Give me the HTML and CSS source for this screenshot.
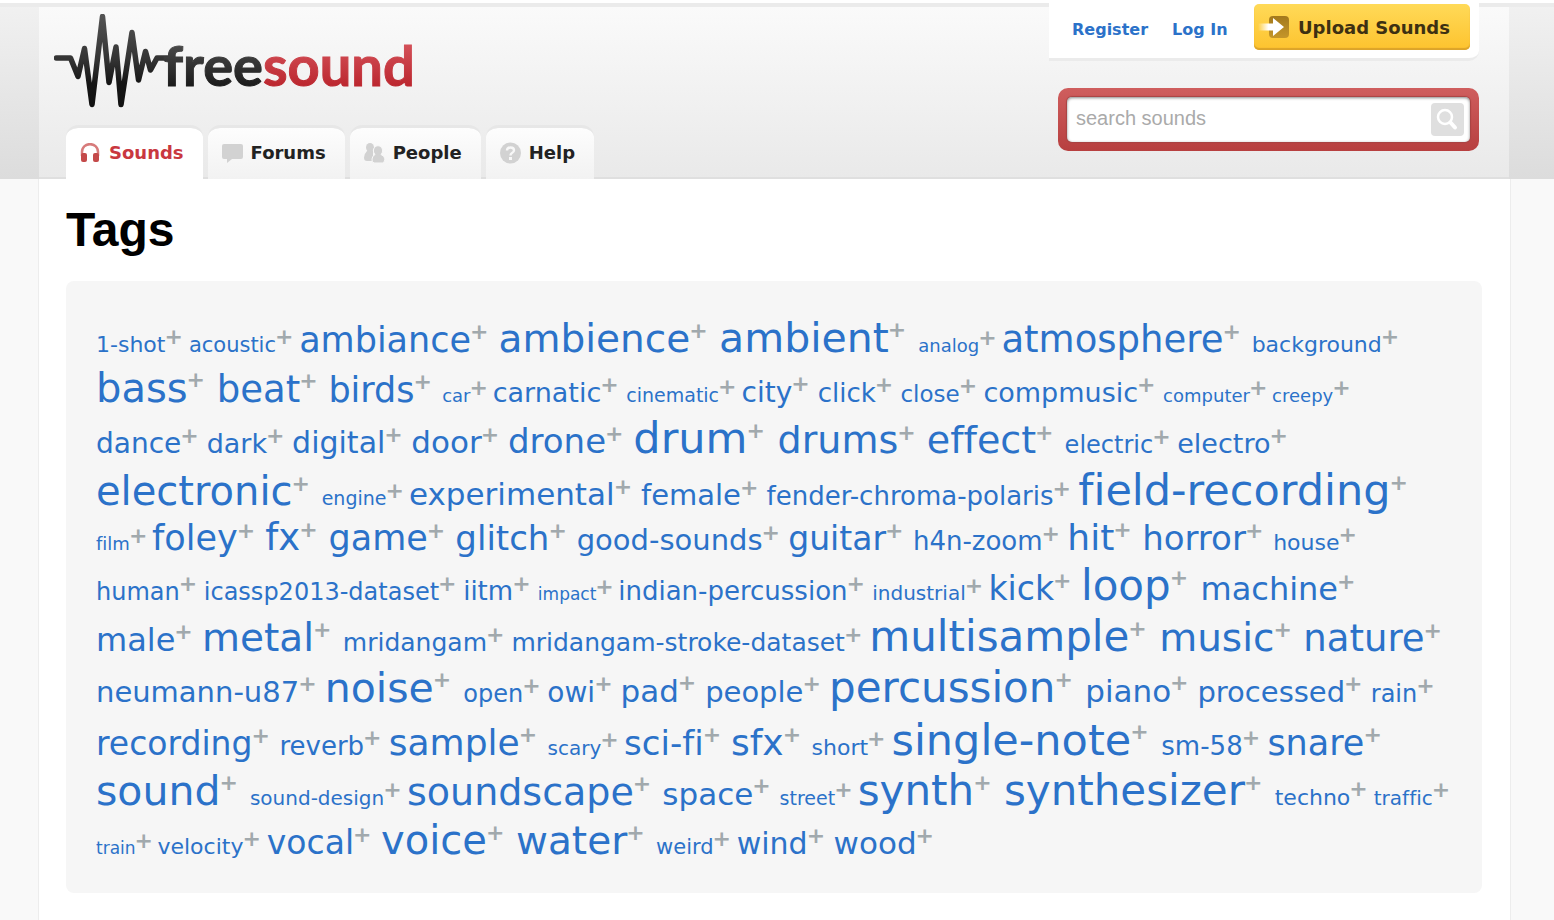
FILE: index.html
```html
<!DOCTYPE html>
<html lang="en">
<head>
    <meta charset="UTF-8">
    <meta name="viewport" content="width=device-width, initial-scale=1.0">
    <title>Freesound - Tags</title>
    <link rel="stylesheet" href="styles.css">
</head>
<body>

    <header id="header">
        <div class="header-inner">
            <div class="header-left">
                <a class="logo" href="#" aria-label="freesound">
                    <svg width="360" height="94" viewBox="54 14 360 94">
                        <defs>
                            <linearGradient id="wave" gradientUnits="userSpaceOnUse" x1="0" y1="14" x2="0" y2="106">
                                <stop offset="0" stop-color="#555"/>
                                <stop offset="0.5" stop-color="#333"/>
                                <stop offset="0.75" stop-color="#161616"/>
                                <stop offset="1" stop-color="#111"/>
                            </linearGradient>
                            <linearGradient id="black" gradientUnits="userSpaceOnUse" x1="0" y1="43" x2="0" y2="87">
                                <stop offset="0" stop-color="#4c4c4c"/>
                                <stop offset="1" stop-color="#1a1a1a"/>
                            </linearGradient>
                            <linearGradient id="red" gradientUnits="userSpaceOnUse" x1="0" y1="43" x2="0" y2="87">
                                <stop offset="0" stop-color="#d4525a"/>
                                <stop offset="1" stop-color="#bb262e"/>
                            </linearGradient>
                        </defs>
                        <path d="M56.500 58H70.500L78 76.500L84.500 48.500L92 104.500L102.500 16.500L109 82.500L116 47L121 104.500L132 32.500L138.500 80L145.500 51.500L150.500 70L157 58H168" fill="none" stroke="url(#wave)" stroke-width="5.500" stroke-linejoin="round" stroke-linecap="round"/>
                        <text x="163" y="86" class="logo-text"><tspan fill="url(#black)" stroke="url(#black)">free</tspan><tspan fill="url(#red)" stroke="url(#red)">sound</tspan></text>
                    </svg>
                </a>
                <nav class="tabs">
                    <a class="tab active" href="#">
                        <svg width="21" height="20" viewBox="0 0 21 20">
                            <path d="M2 13V9C2 -1.500 18 -1.500 18 9V13" fill="none" stroke="#d77b7b" stroke-width="2.500"/>
                            <rect x="1" y="10" width="6" height="9" rx="2" fill="#c44a4a"/>
                            <rect x="13" y="10" width="6" height="9" rx="2" fill="#c44a4a"/>
                        </svg>
                        Sounds
                    </a>
                    <a class="tab" href="#">
                        <svg width="21" height="20" viewBox="0 0 21 20">
                            <path d="M2 1H19Q21 1 21 3V14Q21 16 19 16H10L5 20V16H2Q0 16 0 14V3Q0 1 2 1Z" fill="#d2d2d2"/>
                        </svg>
                        Forums
                    </a>
                    <a class="tab" href="#">
                        <svg width="21" height="20" viewBox="0 0 21 20">
                            <g fill="#d2d2d2">
                                <ellipse cx="6" cy="4.500" rx="4" ry="4.500"/>
                                <path d="M3 8H9V18H3Q0 18 0 14.500Q0 11 3 8Z"/>
                            </g>
                            <g fill="#d2d2d2" stroke="#f8f8f8">
                                <path d="M10 20Q7.500 19 8 16Q8.500 12.500 11 11.500A4.600 5 0 1 1 17 11.500Q20.500 13 21 16Q21 19 18.500 20Z"/>
                            </g>
                        </svg>
                        People
                    </a>
                    <a class="tab" href="#">
                        <svg width="21" height="22" viewBox="0 0 21 22">
                            <circle cx="10.500" cy="11" r="10.500" fill="#d2d2d2"/>
                            <path d="M7 8.500Q7 5.500 10.500 5.500Q14 5.500 14 8.300Q14 10 12 11Q10.500 11.800 10.500 13.500" fill="none" stroke="#f8f8f8" stroke-width="2.400"/>
                            <rect x="9" y="15" width="3" height="3" fill="#f8f8f8"/>
                        </svg>
                        Help
                    </a>
                </nav>
            </div>

            <div class="header-right">
                <div class="user-box">
                    <a href="#">Register</a>
                    <a href="#">Log In</a>
                    <button class="upload" type="button">
                        <svg width="32" height="24" viewBox="0 0 32 24">
                            <defs>
                                <linearGradient id="fade" x1="0" x2="1" y1="0" y2="0">
                                    <stop offset="0" stop-color="#fff" stop-opacity="0"/>
                                    <stop offset="0.4" stop-color="#fff"/>
                                </linearGradient>
                                <linearGradient id="gold" x1="0" x2="0" y1="0" y2="1">
                                    <stop offset="0" stop-color="#a3791c"/>
                                    <stop offset="1" stop-color="#c5962a"/>
                                </linearGradient>
                            </defs>
                            <rect x="11" y="1" width="20" height="22" rx="4" fill="url(#gold)"/>
                            <path d="M0 8.500H15V3L26 12L15 21V15.500H0Z" fill="url(#fade)"/>
                        </svg>
                        Upload Sounds
                    </button>
                </div>
                <form class="search">
                    <div class="search-field">
                        <input type="text" placeholder="search sounds" aria-label="search sounds">
                        <button type="button" aria-label="Search">
                            <svg width="33" height="33" viewBox="0 0 33 33" fill="none" stroke="#fff">
                                <circle cx="14" cy="14" r="7" stroke-width="2.500"/>
                                <path d="M19.500 19.500L24 24.500" stroke-width="4" stroke-linecap="round"/>
                            </svg>
                        </button>
                    </div>
                </form>
            </div>
        </div>
    </header>

    <main id="container">
        <h1>Tags</h1>
        <div class="tagcloud">
            <span class="s22"><a href="#">1-shot</a><a class="add" href="#">+</a> </span>
            <span class="s21"><a href="#">acoustic</a><a class="add" href="#">+</a> </span>
            <span class="s35"><a href="#">ambiance</a><a class="add" href="#">+</a> </span>
            <span class="s39"><a href="#">ambience</a><a class="add" href="#">+</a> </span>
            <span class="s41"><a href="#">ambient</a><a class="add" href="#">+</a> </span>
            <span class="s18"><a href="#">analog</a><a class="add" href="#">+</a> </span>
            <span class="s37"><a href="#">atmosphere</a><a class="add" href="#">+</a> </span>
            <span class="s22"><a href="#">background</a><a class="add" href="#">+</a> </span>
            <span class="s40"><a href="#">bass</a><a class="add" href="#">+</a> </span>
            <span class="s37"><a href="#">beat</a><a class="add" href="#">+</a> </span>
            <span class="s35"><a href="#">birds</a><a class="add" href="#">+</a> </span>
            <span class="s18"><a href="#">car</a><a class="add" href="#">+</a> </span>
            <span class="s27"><a href="#">carnatic</a><a class="add" href="#">+</a> </span>
            <span class="s19"><a href="#">cinematic</a><a class="add" href="#">+</a> </span>
            <span class="s28"><a href="#">city</a><a class="add" href="#">+</a> </span>
            <span class="s26"><a href="#">click</a><a class="add" href="#">+</a> </span>
            <span class="s23"><a href="#">close</a><a class="add" href="#">+</a> </span>
            <span class="s27"><a href="#">compmusic</a><a class="add" href="#">+</a> </span>
            <span class="s18"><a href="#">computer</a><a class="add" href="#">+</a> </span>
            <span class="s18"><a href="#">creepy</a><a class="add" href="#">+</a> </span>
            <span class="s28"><a href="#">dance</a><a class="add" href="#">+</a> </span>
            <span class="s27"><a href="#">dark</a><a class="add" href="#">+</a> </span>
            <span class="s30"><a href="#">digital</a><a class="add" href="#">+</a> </span>
            <span class="s31"><a href="#">door</a><a class="add" href="#">+</a> </span>
            <span class="s34"><a href="#">drone</a><a class="add" href="#">+</a> </span>
            <span class="s43"><a href="#">drum</a><a class="add" href="#">+</a> </span>
            <span class="s38"><a href="#">drums</a><a class="add" href="#">+</a> </span>
            <span class="s38"><a href="#">effect</a><a class="add" href="#">+</a> </span>
            <span class="s24"><a href="#">electric</a><a class="add" href="#">+</a> </span>
            <span class="s27"><a href="#">electro</a><a class="add" href="#">+</a> </span>
            <span class="s40"><a href="#">electronic</a><a class="add" href="#">+</a> </span>
            <span class="s19"><a href="#">engine</a><a class="add" href="#">+</a> </span>
            <span class="s31"><a href="#">experimental</a><a class="add" href="#">+</a> </span>
            <span class="s29"><a href="#">female</a><a class="add" href="#">+</a> </span>
            <span class="s26"><a href="#">fender-chroma-polaris</a><a class="add" href="#">+</a> </span>
            <span class="s43"><a href="#">field-recording</a><a class="add" href="#">+</a> </span>
            <span class="s18"><a href="#">film</a><a class="add" href="#">+</a> </span>
            <span class="s35"><a href="#">foley</a><a class="add" href="#">+</a> </span>
            <span class="s37"><a href="#">fx</a><a class="add" href="#">+</a> </span>
            <span class="s35"><a href="#">game</a><a class="add" href="#">+</a> </span>
            <span class="s34"><a href="#">glitch</a><a class="add" href="#">+</a> </span>
            <span class="s29"><a href="#">good-sounds</a><a class="add" href="#">+</a> </span>
            <span class="s33"><a href="#">guitar</a><a class="add" href="#">+</a> </span>
            <span class="s26"><a href="#">h4n-zoom</a><a class="add" href="#">+</a> </span>
            <span class="s36"><a href="#">hit</a><a class="add" href="#">+</a> </span>
            <span class="s34"><a href="#">horror</a><a class="add" href="#">+</a> </span>
            <span class="s22"><a href="#">house</a><a class="add" href="#">+</a> </span>
            <span class="s24"><a href="#">human</a><a class="add" href="#">+</a> </span>
            <span class="s24"><a href="#">icassp2013-dataset</a><a class="add" href="#">+</a> </span>
            <span class="s26"><a href="#">iitm</a><a class="add" href="#">+</a> </span>
            <span class="s17"><a href="#">impact</a><a class="add" href="#">+</a> </span>
            <span class="s26"><a href="#">indian-percussion</a><a class="add" href="#">+</a> </span>
            <span class="s20"><a href="#">industrial</a><a class="add" href="#">+</a> </span>
            <span class="s33"><a href="#">kick</a><a class="add" href="#">+</a> </span>
            <span class="s42"><a href="#">loop</a><a class="add" href="#">+</a> </span>
            <span class="s32"><a href="#">machine</a><a class="add" href="#">+</a> </span>
            <span class="s32"><a href="#">male</a><a class="add" href="#">+</a> </span>
            <span class="s39"><a href="#">metal</a><a class="add" href="#">+</a> </span>
            <span class="s25"><a href="#">mridangam</a><a class="add" href="#">+</a> </span>
            <span class="s25"><a href="#">mridangam-stroke-dataset</a><a class="add" href="#">+</a> </span>
            <span class="s42"><a href="#">multisample</a><a class="add" href="#">+</a> </span>
            <span class="s39"><a href="#">music</a><a class="add" href="#">+</a> </span>
            <span class="s37"><a href="#">nature</a><a class="add" href="#">+</a> </span>
            <span class="s29"><a href="#">neumann-u87</a><a class="add" href="#">+</a> </span>
            <span class="s41"><a href="#">noise</a><a class="add" href="#">+</a> </span>
            <span class="s24"><a href="#">open</a><a class="add" href="#">+</a> </span>
            <span class="s28"><a href="#">owi</a><a class="add" href="#">+</a> </span>
            <span class="s31"><a href="#">pad</a><a class="add" href="#">+</a> </span>
            <span class="s29"><a href="#">people</a><a class="add" href="#">+</a> </span>
            <span class="s42"><a href="#">percussion</a><a class="add" href="#">+</a> </span>
            <span class="s31"><a href="#">piano</a><a class="add" href="#">+</a> </span>
            <span class="s29"><a href="#">processed</a><a class="add" href="#">+</a> </span>
            <span class="s24"><a href="#">rain</a><a class="add" href="#">+</a> </span>
            <span class="s33"><a href="#">recording</a><a class="add" href="#">+</a> </span>
            <span class="s26"><a href="#">reverb</a><a class="add" href="#">+</a> </span>
            <span class="s36"><a href="#">sample</a><a class="add" href="#">+</a> </span>
            <span class="s20"><a href="#">scary</a><a class="add" href="#">+</a> </span>
            <span class="s34"><a href="#">sci-fi</a><a class="add" href="#">+</a> </span>
            <span class="s36"><a href="#">sfx</a><a class="add" href="#">+</a> </span>
            <span class="s22"><a href="#">short</a><a class="add" href="#">+</a> </span>
            <span class="s43"><a href="#">single-note</a><a class="add" href="#">+</a> </span>
            <span class="s26"><a href="#">sm-58</a><a class="add" href="#">+</a> </span>
            <span class="s35"><a href="#">snare</a><a class="add" href="#">+</a> </span>
            <span class="s41"><a href="#">sound</a><a class="add" href="#">+</a> </span>
            <span class="s20"><a href="#">sound-design</a><a class="add" href="#">+</a> </span>
            <span class="s38"><a href="#">soundscape</a><a class="add" href="#">+</a> </span>
            <span class="s31"><a href="#">space</a><a class="add" href="#">+</a> </span>
            <span class="s19"><a href="#">street</a><a class="add" href="#">+</a> </span>
            <span class="s42"><a href="#">synth</a><a class="add" href="#">+</a> </span>
            <span class="s42"><a href="#">synthesizer</a><a class="add" href="#">+</a> </span>
            <span class="s22"><a href="#">techno</a><a class="add" href="#">+</a> </span>
            <span class="s20"><a href="#">traffic</a><a class="add" href="#">+</a> </span>
            <span class="s17"><a href="#">train</a><a class="add" href="#">+</a> </span>
            <span class="s22"><a href="#">velocity</a><a class="add" href="#">+</a> </span>
            <span class="s33"><a href="#">vocal</a><a class="add" href="#">+</a> </span>
            <span class="s40"><a href="#">voice</a><a class="add" href="#">+</a> </span>
            <span class="s39"><a href="#">water</a><a class="add" href="#">+</a> </span>
            <span class="s21"><a href="#">weird</a><a class="add" href="#">+</a> </span>
            <span class="s30"><a href="#">wind</a><a class="add" href="#">+</a> </span>
            <span class="s31"><a href="#">wood</a><a class="add" href="#">+</a> </span>
        </div>
    </main>

</body>
</html>
```
FILE: styles.css
```css
* {
    box-sizing: border-box;
}
body {
    margin: 0;
    font-family: Verdana, "DejaVu Sans", sans-serif;
    background-color: #f9f9f9;
}
a {
    color: #2b72c9;
    text-decoration: none;
}
button {
    border: none;
    padding: 0;
    font-family: inherit;
    cursor: pointer;
}

/* header */
#header {
    border-top: 3px solid #fff;
    padding: 0 45px 0 39px;
    background: linear-gradient(#f1f1f1, #dcdcdc);
    box-shadow: inset 0 4px 0 #ebebeb;
}
.header-inner {
    display: flex;
    justify-content: space-between;
    padding: 0 30px 0 15px;
    background: linear-gradient(#ebebeb 4px, #fafafa 4px, #e9e9e9);
    box-shadow: inset 0 -2px 0 #dfdfdf;
}
.logo {
    display: block;
    height: 94px;
    margin-top: 11px;
}
.logo-text {
    font-family: Lato, sans-serif;
    font-size: 56px;
    font-weight: 700;
    stroke-width: 1px;
}
.tabs {
    display: flex;
    gap: 5px;
    margin-top: 17px;
    padding-left: 12px;
}
.tab {
    display: flex;
    align-items: center;
    gap: 8px;
    height: 54px;
    padding: 0 19px 2px 14px;
    border-top: 3px solid #e7e7e7;
    border-radius: 12px 12px 0 0;
    background: linear-gradient(#fdfdfd, #f2f2f2) padding-box;
    color: #222;
    font-size: 18px;
    font-weight: bold;
}
.tab.active {
    background: #fff padding-box;
    color: #c9383f;
}
.header-right {
    width: 430px;
}
.user-box {
    display: flex;
    align-items: flex-start;
    gap: 24px;
    height: 58px;
    padding: 1px 9px 0 23px;
    background-color: #fff;
    border-bottom: 3px solid #ebebeb;
    border-bottom-right-radius: 10px;
}
.user-box a {
    padding-top: 16px;
    font-size: 16px;
    line-height: 20px;
    font-weight: bold;
    white-space: nowrap;
}
.upload {
    display: flex;
    align-items: center;
    gap: 8px;
    width: 216px;
    height: 46px;
    margin-left: auto;
    padding-left: 4px;
    border-radius: 5px;
    background: linear-gradient(#ffda58, #fdc32e);
    box-shadow: inset 0 -2px 1px #dca42a;
    color: #3d3012;
    font-size: 18px;
    font-weight: bold;
    white-space: nowrap;
}
.search {
    margin: 27px 0 0 9px;
    padding: 9px;
    border-radius: 10px;
    background: linear-gradient(#cf5e5e, #b73f3f);
}
.search-field {
    display: flex;
    align-items: center;
    height: 45px;
    padding-right: 6px;
    border-radius: 5px;
    background-color: #fff;
    box-shadow: inset 0 1px 3px #888, 0 0 1px 1px #a84444;
}
.search-field input {
    flex: 1;
    min-width: 0;
    padding: 0 9px 2px;
    border: none;
    outline: none;
    background: none;
    font-family: Arial, "Liberation Sans", sans-serif;
    font-size: 20px;
}
.search-field input::placeholder {
    color: #aaa;
}
.search-field button {
    width: 33px;
    height: 33px;
    border-radius: 4px;
    background-color: #dfdfdf;
}

/* page */
#container {
    margin: 0 43px 0 38px;
    padding: 20px 28px 27px 27px;
    background-color: #fff;
    border: solid #ededed;
    border-width: 0 1px;
}
h1 {
    margin: 0 0 20px;
    font-family: Arial, "Liberation Sans", sans-serif;
    font-size: 48px;
    line-height: 62px;
    color: #000;
}
.tagcloud {
    padding: 33px 30px 28px;
    border-radius: 8px;
    background-color: #f6f6f6;
    line-height: 1.21;
    font-variant-ligatures: none;
}
.tagcloud a {
    white-space: nowrap;
}
.tagcloud .add {
    margin: 0 -1px;
    color: #a1a9ad;
    font-size: 22px;
    font-weight: bold;
    line-height: 1;
    vertical-align: super;
}

/* tag sizes by popularity */
.s17 { font-size: 17px; }
.s18 { font-size: 18px; }
.s19 { font-size: 19px; }
.s20 { font-size: 20px; }
.s21 { font-size: 21px; }
.s22 { font-size: 22px; }
.s23 { font-size: 23px; }
.s24 { font-size: 24px; }
.s25 { font-size: 25px; }
.s26 { font-size: 26px; }
.s27 { font-size: 27px; }
.s28 { font-size: 28px; }
.s29 { font-size: 29px; }
.s30 { font-size: 30px; }
.s31 { font-size: 31px; }
.s32 { font-size: 32px; }
.s33 { font-size: 33px; }
.s34 { font-size: 34px; }
.s35 { font-size: 35px; }
.s36 { font-size: 36px; }
.s37 { font-size: 37px; }
.s38 { font-size: 38px; }
.s39 { font-size: 39px; }
.s40 { font-size: 40px; }
.s41 { font-size: 41px; }
.s42 { font-size: 42px; }
.s43 { font-size: 43px; }
```
